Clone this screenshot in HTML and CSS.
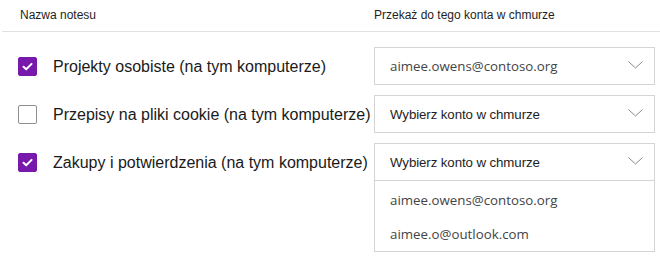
FILE: index.html
```html
<!DOCTYPE html>
<html lang="pl">
<head>
<meta charset="utf-8">
<link rel="stylesheet" href="styles.css">
</head>
<body>
<div class="panel">
  <div class="header">
    <div class="hcell hname">Nazwa notesu</div>
    <div class="hcell">Przekaż do tego konta w chmurze</div>
  </div>
  <div class="rows">
    <div class="label">
      <span class="check checked"><svg viewBox="0 0 19 19" width="19" height="19"><path d="M5.5 9.8 L8.2 12.3 L13.6 6.9" fill="none" stroke="#fff" stroke-width="2" stroke-linecap="round" stroke-linejoin="round"/></svg></span>
      <span class="text">Projekty osobiste (na tym komputerze)</span>
    </div>
    <div class="select">
      <div class="field"><span class="value email">aimee.owens@contoso.org</span><svg class="chev" viewBox="0 0 15 8" width="15" height="8"><path d="M0.5 0.5 L7.5 7 L14.5 0.5" fill="none" stroke="#8a8a8a" stroke-width="1"/></svg></div>
    </div>

    <div class="label">
      <span class="check"></span>
      <span class="text">Przepisy na pliki cookie (na tym komputerze)</span>
    </div>
    <div class="select">
      <div class="field"><span class="value prompt">Wybierz konto w chmurze</span><svg class="chev" viewBox="0 0 15 8" width="15" height="8"><path d="M0.5 0.5 L7.5 7 L14.5 0.5" fill="none" stroke="#8a8a8a" stroke-width="1"/></svg></div>
    </div>

    <div class="label">
      <span class="check checked"><svg viewBox="0 0 19 19" width="19" height="19"><path d="M5.5 9.8 L8.2 12.3 L13.6 6.9" fill="none" stroke="#fff" stroke-width="2" stroke-linecap="round" stroke-linejoin="round"/></svg></span>
      <span class="text">Zakupy i potwierdzenia (na tym komputerze)</span>
    </div>
    <div class="select open">
      <div class="field"><span class="value prompt">Wybierz konto w chmurze</span><svg class="chev" viewBox="0 0 15 8" width="15" height="8"><path d="M0.5 0.5 L7.5 7 L14.5 0.5" fill="none" stroke="#8a8a8a" stroke-width="1"/></svg></div>
      <ul class="list">
        <li class="email">aimee.owens@contoso.org</li>
        <li class="email">aimee.o@outlook.com</li>
      </ul>
    </div>
  </div>
</div>
</body>
</html>
```
FILE: styles.css
```css
* { box-sizing: border-box; }
body {
  margin: 0;
  background: #fff;
  font-family: "Liberation Sans", Arial, sans-serif;
  color: #1e1e1e;
}
.panel { width: 660px; }
.header {
  display: grid;
  grid-template-columns: 372px 284px;
  margin-left: 2px;
  height: 32px;
  border-bottom: 1px solid #e1e1e1;
  font-size: 12px;
  align-items: center;
}
.hcell { padding-bottom: 1px; }
.hname { padding-left: 18px; }
.rows {
  display: grid;
  grid-template-columns: 374px 281px;
  row-gap: 10px;
  padding-top: 15px;
  align-items: start;
}
.label {
  display: flex;
  align-items: center;
  height: 38px;
  padding-left: 18px;
  padding-top: 1px;
}
.check {
  width: 19px;
  height: 19px;
  border: 1px solid #8f8f8f;
  border-radius: 2px;
  flex: none;
  display: block;
}
.check.checked {
  background: #7719aa;
  border-color: #7719aa;
}
.check svg { display: block; margin: -1px; }
.text {
  margin-left: 16px;
  font-size: 16px;
  color: #1a1a1a;
}
.select {
  border: 1px solid #d4d4d4;
}
.field {
  height: 36px;
  display: flex;
  align-items: center;
  justify-content: space-between;
  padding-left: 15px;
  padding-right: 11px;
}
.chev { display: block; margin-top: -3px; }
.email {
  font-family: "Open Sans", "Noto Sans", sans-serif;
  font-size: 13.3px;
  color: #444;
}
.prompt {
  font-size: 13.3px;
  color: #1e1e1e;
  letter-spacing: -0.1px;
}
.list {
  list-style: none;
  margin: 0;
  padding: 0;
  border-top: 1px solid #d4d4d4;
}
.list li {
  height: 34px;
  display: flex;
  align-items: center;
  padding-left: 15px;
}
.list li:first-child { margin-top: 2px; }
```
